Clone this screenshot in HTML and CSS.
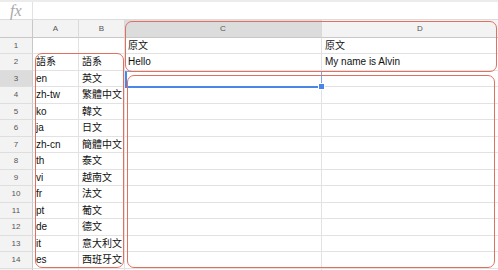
FILE: index.html
```html
<!DOCTYPE html>
<html>
<head>
<meta charset="utf-8">
<link rel="stylesheet" href="styles.css">
</head>
<body>
<div class="app">
  <div class="fbar">
    <div class="fx">fx</div>
    <div class="finput"></div>
  </div>
  <div class="sheet">
    <div class="grid">
      <div class="corner"></div>
      <div class="ch">A</div>
      <div class="ch">B</div>
      <div class="ch sel">C</div>
      <div class="ch">D</div>

      <div class="rh">1</div><div class="c"></div><div class="c"></div><div class="c">原文</div><div class="c">原文</div>
      <div class="rh">2</div><div class="c">語系</div><div class="c">語系</div><div class="c">Hello</div><div class="c">My name is Alvin</div>
      <div class="rh sel">3</div><div class="c">en</div><div class="c">英文</div><div class="c"></div><div class="c"></div>
      <div class="rh">4</div><div class="c">zh-tw</div><div class="c">繁體中文</div><div class="c"></div><div class="c"></div>
      <div class="rh">5</div><div class="c">ko</div><div class="c">韓文</div><div class="c"></div><div class="c"></div>
      <div class="rh">6</div><div class="c">ja</div><div class="c">日文</div><div class="c"></div><div class="c"></div>
      <div class="rh">7</div><div class="c">zh-cn</div><div class="c">簡體中文</div><div class="c"></div><div class="c"></div>
      <div class="rh">8</div><div class="c">th</div><div class="c">泰文</div><div class="c"></div><div class="c"></div>
      <div class="rh">9</div><div class="c">vi</div><div class="c">越南文</div><div class="c"></div><div class="c"></div>
      <div class="rh">10</div><div class="c">fr</div><div class="c">法文</div><div class="c"></div><div class="c"></div>
      <div class="rh">11</div><div class="c">pt</div><div class="c">葡文</div><div class="c"></div><div class="c"></div>
      <div class="rh">12</div><div class="c">de</div><div class="c">德文</div><div class="c"></div><div class="c"></div>
      <div class="rh">13</div><div class="c">it</div><div class="c">意大利文</div><div class="c"></div><div class="c"></div>
      <div class="rh">14</div><div class="c">es</div><div class="c">西班牙文</div><div class="c"></div><div class="c"></div>
      <div class="rh"></div><div class="c"></div><div class="c"></div><div class="c"></div><div class="c"></div>
    </div>
    <div class="selbox"><span class="handle"></span></div>
    <div class="note note-ab"></div>
    <div class="note note-head"></div>
    <div class="note note-body"></div>
  </div>
</div>
</body>
</html>
```

FILE: styles.css
```css
html, body {
  margin: 0;
  padding: 0;
  background: #fff;
  overflow: hidden;
}
.app {
  width: 498px;
  height: 270px;
  overflow: hidden;
  font-family: "Liberation Sans", Arial, "Noto Sans CJK TC", sans-serif;
}
.fbar {
  height: 20px;
  display: flex;
  box-sizing: border-box;
  border-top: 2px solid #ececec;
  border-bottom: 1px solid #dcdcdc;
}
.fx {
  width: 33px;
  box-sizing: border-box;
  border-right: 1px solid #e2e2e2;
  font-family: "Liberation Serif", serif;
  font-style: italic;
  color: #a8a8a8;
  font-size: 16px;
  line-height: 17px;
  padding-left: 10px;
}
.finput {
  flex: 1;
}
.sheet {
  position: relative;
}
.grid {
  display: grid;
  grid-template-columns: 33px 46px 46px 197px 197px;
  grid-template-rows: 17.5px repeat(15, 16.5px);
}
.grid > div {
  box-sizing: border-box;
  border-right: 1px solid #e2e2e2;
  border-bottom: 1px solid #e2e2e2;
  white-space: nowrap;
  overflow: hidden;
}
.corner {
  background: #f3f3f3;
  border-bottom: 1px solid #c8c8c8 !important;
  border-right: 1px solid #c8c8c8 !important;
}
.ch {
  background: #f3f3f3;
  color: #555;
  font-size: 8px;
  text-align: center;
  line-height: 17px;
  border-bottom: 1px solid #c8c8c8 !important;
  border-right: 1px solid #dadada !important;
}
.ch.sel {
  background: #dcdcdc;
}
.rh {
  background: #f3f3f3;
  color: #555;
  font-size: 8px;
  text-align: center;
  line-height: 16px;
  border-right: 1px solid #c8c8c8 !important;
  border-bottom: 1px solid #dedede !important;
}
.rh.sel {
  background: #dcdcdc;
}
.c {
  font-size: 10px;
  color: #111;
  line-height: 16px;
  padding-left: 3px;
}
.selbox {
  position: absolute;
  left: 125px;
  top: 50.5px;
  width: 197px;
  height: 17.5px;
  box-sizing: border-box;
  border: 1px solid #7aa6ee;
  border-bottom: 2px solid #4a86e8;
  border-left: 2px solid #4a86e8;
}
.handle {
  position: absolute;
  right: -4px;
  bottom: -4px;
  width: 5px;
  height: 5px;
  background: #4a86e8;
  border: 1px solid #fff;
}
.note {
  position: absolute;
  box-sizing: border-box;
  border: 1.5px solid #e2705f;
  border-radius: 7px;
}
.note-ab {
  left: 35px;
  top: 33px;
  width: 89px;
  height: 215px;
}
.note-head {
  left: 125px;
  top: 1px;
  width: 372px;
  height: 51px;
}
.note-body {
  left: 127px;
  top: 55px;
  width: 368px;
  height: 193px;
}
```
